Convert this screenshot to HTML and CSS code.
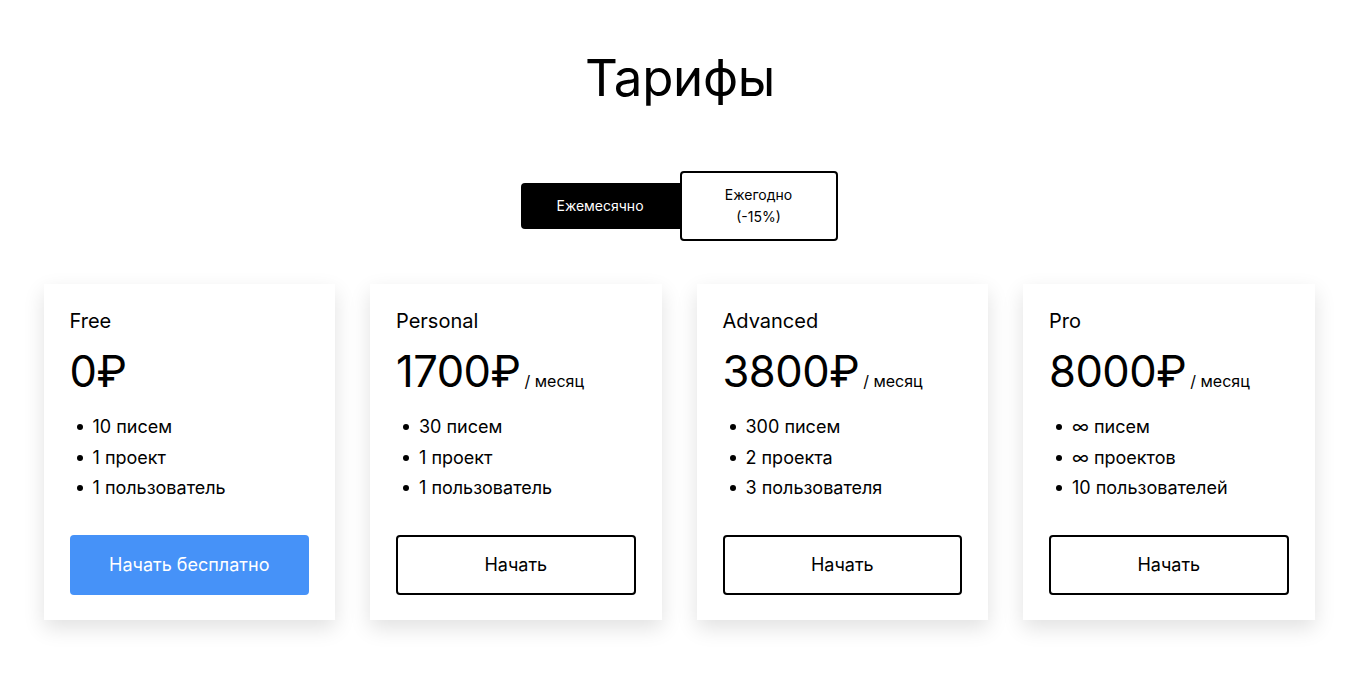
FILE: index.html
```html
<!DOCTYPE html>
<html lang="ru">
<head>
<meta charset="utf-8">
<title>Тарифы</title>
<link rel="stylesheet" href="styles.css">
</head>
<body>
<main class="page">
  <h1 class="title">Тарифы</h1>
  <div class="toggle">
    <button class="toggle-btn toggle-active">Ежемесячно</button>
    <button class="toggle-btn toggle-idle">Ежегодно<br>(-15%)</button>
  </div>
  <section class="cards">
    <div class="card">
      <div class="plan">Free</div>
      <div class="price"><span class="amount">0₽</span></div>
      <ul class="features">
        <li>10 писем</li>
        <li>1 проект</li>
        <li>1 пользователь</li>
      </ul>
      <button class="cta cta-primary">Начать бесплатно</button>
    </div>
    <div class="card">
      <div class="plan">Personal</div>
      <div class="price"><span class="amount">1700₽</span><span class="period">/ месяц</span></div>
      <ul class="features">
        <li>30 писем</li>
        <li>1 проект</li>
        <li>1 пользователь</li>
      </ul>
      <button class="cta cta-outline">Начать</button>
    </div>
    <div class="card">
      <div class="plan">Advanced</div>
      <div class="price"><span class="amount">3800₽</span><span class="period">/ месяц</span></div>
      <ul class="features">
        <li>300 писем</li>
        <li>2 проекта</li>
        <li>3 пользователя</li>
      </ul>
      <button class="cta cta-outline">Начать</button>
    </div>
    <div class="card">
      <div class="plan">Pro</div>
      <div class="price"><span class="amount">8000₽</span><span class="period">/ месяц</span></div>
      <ul class="features">
        <li>∞ писем</li>
        <li>∞ проектов</li>
        <li>10 пользователей</li>
      </ul>
      <button class="cta cta-outline">Начать</button>
    </div>
  </section>
</main>
</body>
</html>
```
FILE: styles.css
```css
* { box-sizing: border-box; }
html, body { margin: 0; padding: 0; background: #fff; }
body {
  font-family: Inter, "Noto Sans", "Liberation Sans", sans-serif;
  color: #000;
}
.page {
  display: flex;
  flex-direction: column;
  align-items: center;
  padding-top: 44px;
  padding-bottom: 60px;
}
.title {
  margin: 0;
  font-size: 51px;
  font-weight: 400;
  line-height: 67px;
  letter-spacing: -0.3px;
}
.toggle {
  margin-top: 60px;
  display: flex;
  align-items: center;
  margin-right: 2px;
}
.toggle-btn {
  font-family: inherit;
  font-size: 14px;
  line-height: 22px;
  cursor: pointer;
  border-radius: 4px;
  padding: 0;
}
.toggle-active {
  width: 159px;
  height: 46px;
  background: #000;
  color: #fff;
  border: none;
  border-radius: 4px 0 0 4px;
}
.toggle-idle {
  width: 158px;
  height: 70px;
  background: #fff;
  color: #000;
  border: 2px solid #000;
}
.cards {
  margin-top: 43px;
  display: flex;
  gap: 35px;
  margin-right: 2px;
}
.card {
  width: 291.5px;
  background: #fff;
  padding: 25px 26px 25px 26px;
  box-shadow: 0 8px 20px rgba(0, 0, 0, 0.12);
  display: flex;
  flex-direction: column;
}
.plan {
  font-size: 20px;
  line-height: 24px;
}
.price {
  margin-top: 13px;
  display: flex;
  align-items: baseline;
  height: 50px;
  line-height: 50px;
}
.amount {
  font-size: 43.5px;
  letter-spacing: -0.5px;
}
.period {
  font-size: 16px;
  line-height: 20px;
  margin-left: 4px;
}
.features {
  list-style: none;
  margin: 16px 0 0 0;
  padding: 0;
}
.features li {
  display: flex;
  align-items: center;
  font-size: 18px;
  line-height: 30.5px;
}
.features li::before {
  content: "";
  width: 6px;
  height: 6px;
  border-radius: 50%;
  background: #000;
  margin-left: 7px;
  margin-right: 10px;
  flex: none;
}
.cta {
  margin-top: 31px;
  height: 60px;
  width: 100%;
  font-family: inherit;
  font-size: 18px;
  border-radius: 4px;
  cursor: pointer;
}
.cta-primary {
  background: #4692f8;
  color: #fff;
  border: none;
}
.cta-outline {
  background: #fff;
  color: #000;
  border: 2px solid #000;
}
```
